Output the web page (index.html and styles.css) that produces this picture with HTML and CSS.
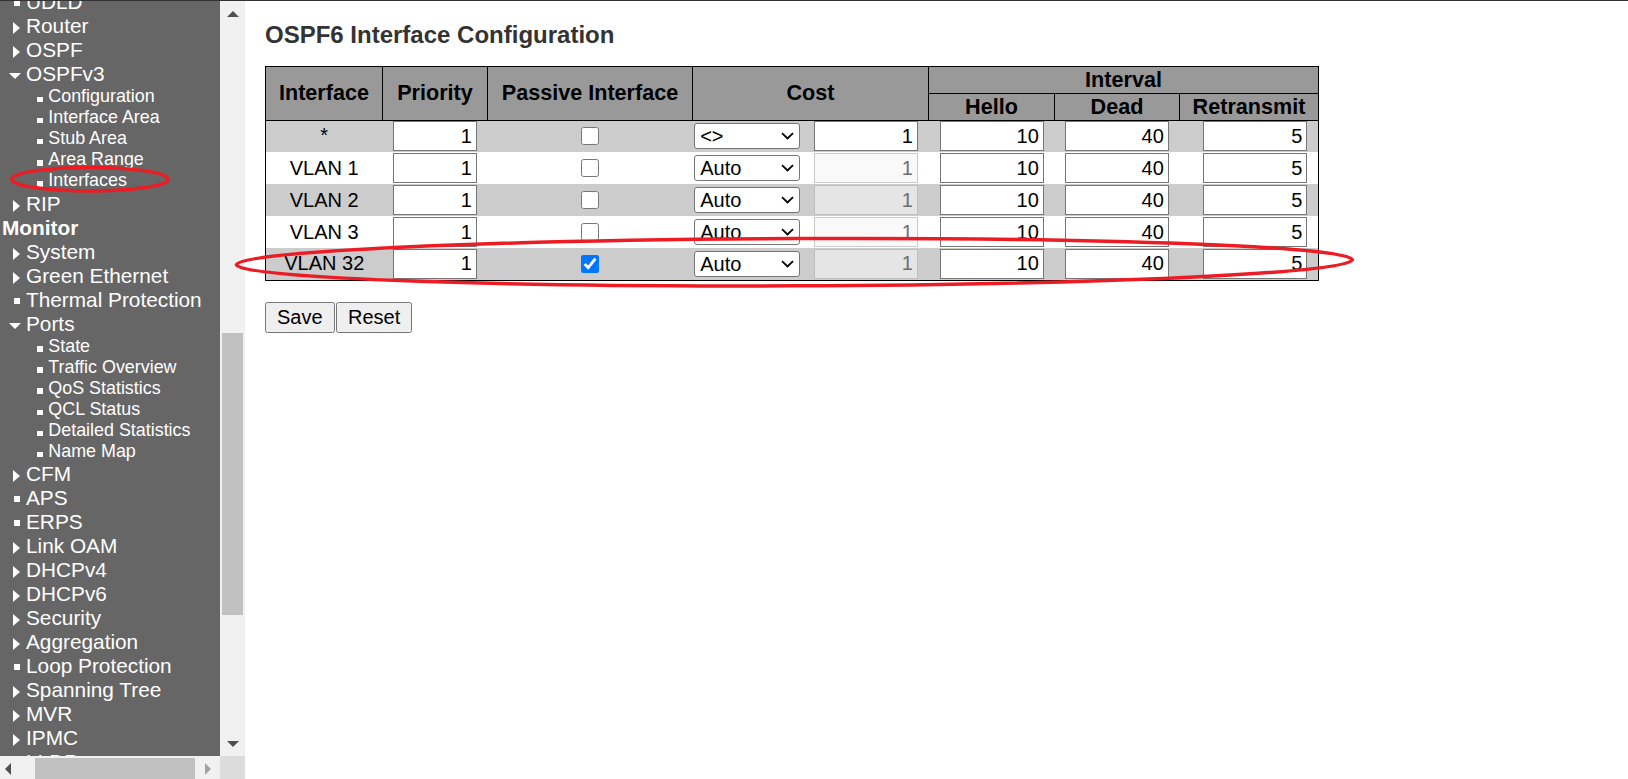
FILE: index.html
```html
<!DOCTYPE html>
<html lang="en">
<head>
<meta charset="utf-8">
<title>OSPF6 Interface Configuration</title>
<link rel="stylesheet" href="styles.css">
</head>
<body>
<div class="page">
  <aside class="side">
    <nav class="nav">
      <ul class="nav-list">
        <li class="item"><span class="ico sq"></span><span>UDLD</span></li>
        <li class="item"><span class="ico tri-r"></span><span>Router</span></li>
        <li class="item"><span class="ico tri-r"></span><span>OSPF</span></li>
        <li class="item"><span class="ico tri-d"></span><span>OSPFv3</span></li>
        <li class="sub"><span class="dot"></span><span>Configuration</span></li>
        <li class="sub"><span class="dot"></span><span>Interface Area</span></li>
        <li class="sub"><span class="dot"></span><span>Stub Area</span></li>
        <li class="sub"><span class="dot"></span><span>Area Range</span></li>
        <li class="sub"><span class="dot"></span><span>Interfaces</span></li>
        <li class="item"><span class="ico tri-r"></span><span>RIP</span></li>
        <li class="item head"><span>Monitor</span></li>
        <li class="item"><span class="ico tri-r"></span><span>System</span></li>
        <li class="item"><span class="ico tri-r"></span><span>Green Ethernet</span></li>
        <li class="item"><span class="ico sq"></span><span>Thermal Protection</span></li>
        <li class="item"><span class="ico tri-d"></span><span>Ports</span></li>
        <li class="sub"><span class="dot"></span><span>State</span></li>
        <li class="sub"><span class="dot"></span><span>Traffic Overview</span></li>
        <li class="sub"><span class="dot"></span><span>QoS Statistics</span></li>
        <li class="sub"><span class="dot"></span><span>QCL Status</span></li>
        <li class="sub"><span class="dot"></span><span>Detailed Statistics</span></li>
        <li class="sub"><span class="dot"></span><span>Name Map</span></li>
        <li class="item"><span class="ico tri-r"></span><span>CFM</span></li>
        <li class="item"><span class="ico sq"></span><span>APS</span></li>
        <li class="item"><span class="ico sq"></span><span>ERPS</span></li>
        <li class="item"><span class="ico tri-r"></span><span>Link OAM</span></li>
        <li class="item"><span class="ico tri-r"></span><span>DHCPv4</span></li>
        <li class="item"><span class="ico tri-r"></span><span>DHCPv6</span></li>
        <li class="item"><span class="ico tri-r"></span><span>Security</span></li>
        <li class="item"><span class="ico tri-r"></span><span>Aggregation</span></li>
        <li class="item"><span class="ico sq"></span><span>Loop Protection</span></li>
        <li class="item"><span class="ico tri-r"></span><span>Spanning Tree</span></li>
        <li class="item"><span class="ico tri-r"></span><span>MVR</span></li>
        <li class="item"><span class="ico tri-r"></span><span>IPMC</span></li>
        <li class="item"><span class="ico tri-r"></span><span>LLDP</span></li>
        <li class="item"><span class="ico tri-r"></span><span>MAC Table</span></li>
      </ul>
    </nav>
    <div class="vbar">
      <div class="sb-btn"><span class="arr-up"></span></div>
      <div class="vtrack"><div class="vthumb"></div></div>
      <div class="sb-btn"><span class="arr-down"></span></div>
    </div>
    <div class="hbar">
      <div class="hbtn-l"><span class="arr-left"></span></div>
      <div class="hthumb"></div>
      <div class="hbtn-r"><span class="arr-right"></span></div>
    </div>
    <div class="corner"></div>
  </aside>

  <main class="main">
    <h1 class="title">OSPF6 Interface Configuration</h1>
    <table class="cfg">
      <colgroup>
        <col class="w-if"><col class="w-pri"><col class="w-pas"><col class="w-csel"><col class="w-cin"><col class="w-hel"><col class="w-dead"><col class="w-ret">
      </colgroup>
      <thead>
        <tr>
          <th rowspan="2">Interface</th>
          <th rowspan="2">Priority</th>
          <th rowspan="2">Passive Interface</th>
          <th rowspan="2" colspan="2">Cost</th>
          <th colspan="3">Interval</th>
        </tr>
        <tr>
          <th>Hello</th>
          <th>Dead</th>
          <th>Retransmit</th>
        </tr>
      </thead>
      <tbody>
        <tr>
          <td class="c-name c-star">*</td>
          <td class="c-num"><input class="num pri" type="text" value="1"></td>
          <td class="c-chk"><input class="chk" type="checkbox"></td>
          <td class="c-sel"><span class="sel-wrap"><select class="sel"><option>&lt;&gt;</option><option>Auto</option><option>Specific</option></select><svg class="chev" width="13" height="8" viewBox="0 0 13 8"><path d="M1 1.2 L6.5 6.5 L12 1.2" fill="none" stroke="#000" stroke-width="1.8"/></svg></span></td>
          <td class="c-num"><input class="num" type="text" value="1"></td>
          <td class="c-num"><input class="num" type="text" value="10"></td>
          <td class="c-num"><input class="num" type="text" value="40"></td>
          <td class="c-num"><input class="num" type="text" value="5"></td>
        </tr>
        <tr>
          <td class="c-name">VLAN 1</td>
          <td class="c-num"><input class="num pri" type="text" value="1"></td>
          <td class="c-chk"><input class="chk" type="checkbox"></td>
          <td class="c-sel"><span class="sel-wrap"><select class="sel"><option>Auto</option><option>Specific</option></select><svg class="chev" width="13" height="8" viewBox="0 0 13 8"><path d="M1 1.2 L6.5 6.5 L12 1.2" fill="none" stroke="#000" stroke-width="1.8"/></svg></span></td>
          <td class="c-num"><input class="num" type="text" value="1" disabled></td>
          <td class="c-num"><input class="num" type="text" value="10"></td>
          <td class="c-num"><input class="num" type="text" value="40"></td>
          <td class="c-num"><input class="num" type="text" value="5"></td>
        </tr>
        <tr>
          <td class="c-name">VLAN 2</td>
          <td class="c-num"><input class="num pri" type="text" value="1"></td>
          <td class="c-chk"><input class="chk" type="checkbox"></td>
          <td class="c-sel"><span class="sel-wrap"><select class="sel"><option>Auto</option><option>Specific</option></select><svg class="chev" width="13" height="8" viewBox="0 0 13 8"><path d="M1 1.2 L6.5 6.5 L12 1.2" fill="none" stroke="#000" stroke-width="1.8"/></svg></span></td>
          <td class="c-num"><input class="num" type="text" value="1" disabled></td>
          <td class="c-num"><input class="num" type="text" value="10"></td>
          <td class="c-num"><input class="num" type="text" value="40"></td>
          <td class="c-num"><input class="num" type="text" value="5"></td>
        </tr>
        <tr>
          <td class="c-name">VLAN 3</td>
          <td class="c-num"><input class="num pri" type="text" value="1"></td>
          <td class="c-chk"><input class="chk" type="checkbox"></td>
          <td class="c-sel"><span class="sel-wrap"><select class="sel"><option>Auto</option><option>Specific</option></select><svg class="chev" width="13" height="8" viewBox="0 0 13 8"><path d="M1 1.2 L6.5 6.5 L12 1.2" fill="none" stroke="#000" stroke-width="1.8"/></svg></span></td>
          <td class="c-num"><input class="num" type="text" value="1" disabled></td>
          <td class="c-num"><input class="num" type="text" value="10"></td>
          <td class="c-num"><input class="num" type="text" value="40"></td>
          <td class="c-num"><input class="num" type="text" value="5"></td>
        </tr>
        <tr>
          <td class="c-name">VLAN 32</td>
          <td class="c-num"><input class="num pri" type="text" value="1"></td>
          <td class="c-chk"><input class="chk" type="checkbox" checked></td>
          <td class="c-sel"><span class="sel-wrap"><select class="sel"><option>Auto</option><option>Specific</option></select><svg class="chev" width="13" height="8" viewBox="0 0 13 8"><path d="M1 1.2 L6.5 6.5 L12 1.2" fill="none" stroke="#000" stroke-width="1.8"/></svg></span></td>
          <td class="c-num"><input class="num" type="text" value="1" disabled></td>
          <td class="c-num"><input class="num" type="text" value="10"></td>
          <td class="c-num"><input class="num" type="text" value="40"></td>
          <td class="c-num"><input class="num" type="text" value="5"></td>
        </tr>
      </tbody>
    </table>
    <div class="actions">
      <button class="btn" type="button">Save</button>
      <button class="btn" type="button">Reset</button>
    </div>
  </main>
</div>

<svg class="annot" width="1628" height="779" viewBox="0 0 1628 779" aria-hidden="true">
  <ellipse cx="90" cy="179.2" rx="78.3" ry="11.8" fill="none" stroke="#ed1c24" stroke-width="3.5"/>
  <ellipse cx="794.4" cy="262.2" rx="558" ry="23.6" fill="none" stroke="#ed1c24" stroke-width="3.5" transform="rotate(-0.25 794.4 262.2)"/>
</svg>
</body>
</html>
```

FILE: styles.css
```css
* { box-sizing: border-box; }

html, body {
  margin: 0;
  height: 100%;
}

body {
  position: relative;
  overflow: hidden;
  background: #fff;
  font-family: "Liberation Sans", Arial, sans-serif;
  color: #000;
}

.page {
  display: flex;
  height: 779px;
  overflow: hidden;
  border-top: 1px solid #333;
}

/* ---------- left frame ---------- */
.side {
  flex: none;
  width: 245px;
  display: grid;
  grid-template-columns: 220px 25px;
  grid-template-rows: 755px 25px;
}

.nav {
  background: #666;
  color: #fff;
  overflow: hidden;
}

.nav-list {
  list-style: none;
  margin: -10.9px 0 0;
  padding: 0;
}

.item {
  display: flex;
  align-items: flex-start;
  height: 24px;
  line-height: 24px;
  font-size: 20.8px;
  white-space: nowrap;
}

.ico { flex: none; }

.tri-r {
  width: 0;
  height: 0;
  border-top: 6px solid transparent;
  border-bottom: 6px solid transparent;
  border-left: 7px solid #fff;
  margin: 8px 6px 0 13px;
}

.tri-d {
  width: 0;
  height: 0;
  border-left: 6px solid transparent;
  border-right: 6px solid transparent;
  border-top: 6px solid #fff;
  margin: 11px 5.5px 0 8.5px;
}

.sq {
  width: 6px;
  height: 6px;
  background: #fff;
  margin: 10px 6px 0 14px;
}

.head {
  font-weight: bold;
  padding-left: 2px;
}

.sub {
  display: flex;
  align-items: flex-start;
  height: 21.1px;
  line-height: 21.1px;
  font-size: 17.9px;
  white-space: nowrap;
}

.dot {
  flex: none;
  width: 5.5px;
  height: 5.5px;
  background: #fff;
  margin: 10.7px 5.8px 0 37px;
}

/* fake scrollbars of the frame */
.vbar {
  background: #f1f1f1;
  display: flex;
  flex-direction: column;
}

.sb-btn {
  flex: none;
  height: 25px;
  display: flex;
  align-items: center;
  justify-content: center;
}

.arr-up {
  width: 0;
  height: 0;
  border-left: 6px solid transparent;
  border-right: 6px solid transparent;
  border-bottom: 6px solid #505050;
}

.arr-down {
  width: 0;
  height: 0;
  border-left: 6px solid transparent;
  border-right: 6px solid transparent;
  border-top: 6px solid #505050;
}

.vtrack {
  flex: 1;
  padding: 307px 2px 0;
}

.vthumb {
  height: 282px;
  background: #c1c1c1;
}

.hbar {
  background: #f1f1f1;
  display: flex;
}

.hbtn-l {
  flex: none;
  width: 35px;
  display: flex;
  align-items: center;
  padding-left: 5px;
}

.arr-left {
  width: 0;
  height: 0;
  border-top: 6px solid transparent;
  border-bottom: 6px solid transparent;
  border-right: 6px solid #505050;
}

.hthumb {
  flex: none;
  width: 160px;
  margin: 2px 0;
  background: #c1c1c1;
}

.hbtn-r {
  flex: 1;
  display: flex;
  align-items: center;
  padding-left: 10px;
}

.arr-right {
  width: 0;
  height: 0;
  border-top: 6px solid transparent;
  border-bottom: 6px solid transparent;
  border-left: 6px solid #a3a3a3;
}

.corner { background: #dcdcdc; }

/* ---------- main frame ---------- */
.main {
  flex: 1;
  padding: 20px 0 0 20px;
}

.title {
  margin: 0 0 16.7px;
  font-size: 24px;
  font-weight: bold;
  line-height: normal;
  color: #333;
}

.cfg {
  width: 1053px;
  table-layout: fixed;
  border-collapse: collapse;
  border: 1px solid #000;
  font-size: 20px;
}

.w-if { width: 117px; }
.w-pri { width: 105px; }
.w-pas { width: 205px; }
.w-csel { width: 110px; }
.w-cin { width: 126px; }
.w-hel { width: 126px; }
.w-dead { width: 125px; }
.w-ret { width: 139px; }

.cfg th {
  height: 27px;
  padding: 0;
  background: #999;
  border: 1px solid #000;
  font-size: 21.6px;
  font-weight: bold;
  color: #000;
  line-height: 24px;
}

.cfg td {
  height: 32px;
  padding: 0;
  vertical-align: middle;
}

.cfg tbody tr:nth-child(odd) { background: #ccc; }
.cfg tbody tr:nth-child(even) { background: #fff; }

.cfg td.c-name { text-align: center; }
.cfg td.c-star { vertical-align: top; padding-top: 3px; line-height: 22px; }
.cfg td.c-num { padding-right: 10.7px; }
.cfg td.c-chk { text-align: center; }
.cfg td.c-sel { padding-left: 1.7px; }

.num {
  display: block;
  margin-left: auto;
  width: 104px;
  height: 30px;
  padding: 0 4px 0 2px;
  border: 1px solid #767676;
  background: #fff;
  color: #000;
  font: 20px "Liberation Sans", Arial, sans-serif;
  text-align: right;
}

.num.pri { width: 84px; }

.num:disabled {
  background: rgba(245, 245, 245, 0.6);
  border-color: rgba(118, 118, 118, 0.35);
  color: #6d6d6d;
}

.chk {
  display: block;
  width: 18px;
  height: 18px;
  margin: 0 auto;
}

.sel-wrap {
  position: relative;
  display: block;
  width: 106px;
}

.sel {
  display: block;
  width: 106px;
  height: 26px;
  padding: 0 0 0 5px;
  border: 1px solid #767676;
  border-radius: 3px;
  background: #fff;
  color: #000;
  font: 20px "Liberation Sans", Arial, sans-serif;
  -webkit-appearance: none;
  appearance: none;
}

.chev {
  position: absolute;
  right: 6.5px;
  top: 9px;
  pointer-events: none;
}

.actions {
  display: flex;
  gap: 1.4px;
  margin-top: 21.4px;
}

.btn {
  height: 30.6px;
  padding: 0 11px;
  border: 1px solid #767676;
  border-radius: 2.5px;
  background: #efefef;
  color: #000;
  font: 20px "Liberation Sans", Arial, sans-serif;
}

/* red hand-drawn annotation marks over the screenshot */
.annot {
  position: absolute;
  left: 0;
  top: 0;
  pointer-events: none;
}
```
